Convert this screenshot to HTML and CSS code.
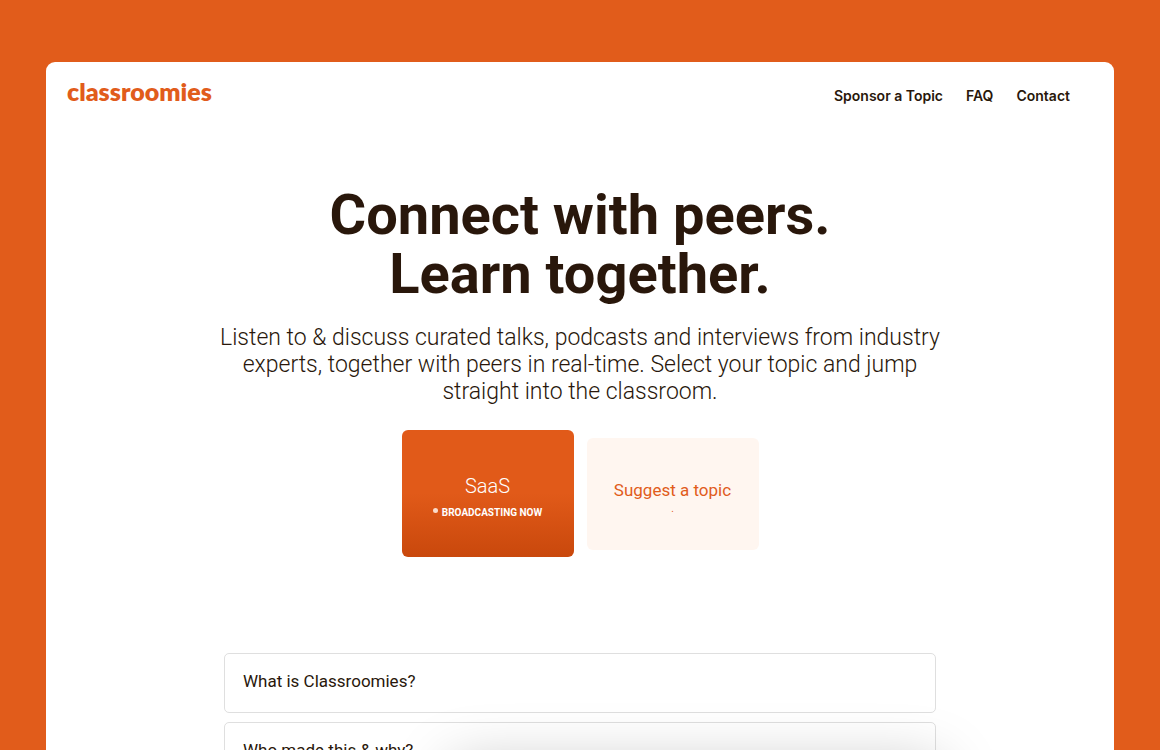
FILE: index.html
```
<!DOCTYPE html>
<html lang="en">
<head>
    <meta charset="UTF-8">
    <meta name="viewport" content="width=device-width, initial-scale=1.0">
    <title>Classroomies</title>
    <link rel="stylesheet" href="styles.css">
</head>
<body>
    <div class="page">
        <header class="header">
            <a class="logo" href="#">classroomies</a>
            <nav class="nav">
                <a href="#sponsor">Sponsor a Topic</a>
                <a href="#faq">FAQ</a>
                <a href="#contact">Contact</a>
            </nav>
        </header>

        <main>
            <section class="hero">
                <h1>Connect with peers.<br>Learn together.</h1>
                <p>Listen to &amp; discuss curated talks, podcasts and interviews from industry experts, together with peers in real-time. Select your topic and jump straight into the classroom.</p>
            </section>

            <!-- Topics -->
            <div class="topics">
                <a class="topic topic-live" href="#saas">
                    <span class="topic-name">SaaS</span>
                    <span class="topic-status"><span class="live-dot"></span>Broadcasting now</span>
                </a>
                <a class="topic topic-suggest" href="#suggest">
                    <span class="topic-name">Suggest a topic</span>
                    <span class="topic-status">.</span>
                </a>
            </div>

            <!-- FAQ -->
            <section class="faq" id="faq">
                <button type="button" class="question">What is Classroomies?</button>
                <button type="button" class="question">Who made this &amp; why?</button>
            </section>
        </main>
    </div>

    <div class="player"></div>
</body>
</html>
```
FILE: styles.css
```
* {
    box-sizing: border-box;
}

body {
    margin: 0;
    padding: 62px 46px 0;
    background: #e15c1b;
    color: #29170b;
    font-family: Roboto, Arial, sans-serif;
}

a {
    color: inherit;
    text-decoration: none;
}

.page {
    min-height: calc(100vh - 62px);
    padding-bottom: 60px;
    background: #fff;
    border-radius: 9px 9px 0 0;
}

.header {
    display: flex;
    justify-content: space-between;
    align-items: center;
    height: 66px;
    padding: 0 44px 0 21px;
}

.logo {
    color: #e15c1b;
    font-family: Lato, sans-serif;
    font-size: 25px;
    font-weight: 800;
    line-height: 32px;
    padding-bottom: 8px;
}

.nav {
    display: flex;
    gap: 23px;
    font-family: Inter, sans-serif;
    font-size: 14px;
    font-weight: 600;
}

.hero {
    max-width: 740px;
    margin: 0 auto;
    padding-top: 58px;
    text-align: center;
}

.hero h1 {
    margin: 0;
    font-size: 56px;
    font-weight: 700;
    line-height: 59px;
}

.hero p {
    margin: 20px 0 0;
    font-size: 23px;
    font-weight: 300;
    line-height: 27px;
}

.topics {
    display: flex;
    justify-content: center;
    align-items: center;
    gap: 13px;
    margin-top: 25px;
}

.topic {
    display: flex;
    flex-direction: column;
    justify-content: center;
    align-items: center;
    width: 172px;
    height: 112px;
    border-radius: 6px;
}

.topic-name {
    font-size: 17px;
    line-height: 24px;
}

.topic-status {
    font-size: 10px;
    line-height: 14px;
}

.topic-live {
    height: 127px;
    padding-top: 6px;
    gap: 8px;
    background: linear-gradient(#e15a19 50%, #c9480c);
    color: #fff;
}

.topic-live .topic-name {
    font-size: 20px;
    font-weight: 300;
}

.topic-live .topic-status {
    display: flex;
    gap: 4px;
    font-weight: 700;
    text-transform: uppercase;
}

.live-dot {
    width: 5px;
    height: 5px;
    margin-top: 2px;
    border-radius: 50%;
    background: #fbdccb;
}

.topic-suggest {
    padding-top: 6px;
    background: #fff6f0;
    color: #e15c1b;
}

.faq {
    display: flex;
    flex-direction: column;
    gap: 9px;
    max-width: 712px;
    margin: 96px auto 0;
}

.question {
    height: 60px;
    padding: 0 18px 4px;
    border: 1px solid #dfdfdf;
    border-radius: 5px;
    background: #fff;
    color: inherit;
    font-family: inherit;
    font-size: 17px;
    font-weight: 400;
    text-align: left;
}

/* waits just below the window, only its shadow shows */
.player {
    position: fixed;
    top: 100%;
    left: 39%;
    right: 19%;
    height: 80px;
    margin-top: 16px;
    box-shadow: 0 0 60px rgba(0, 0, 0, 0.25);
}
```
